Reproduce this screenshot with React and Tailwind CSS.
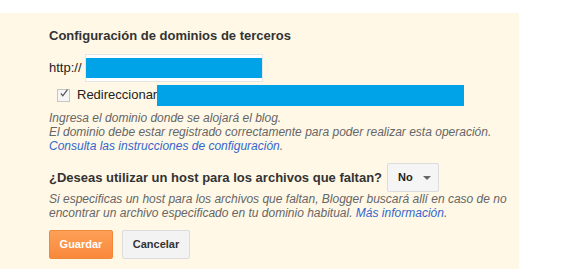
export default function App() {
  return (
    <div className="w-[561px] h-[279px] bg-white pt-[13px]" style={{ fontFamily: '"Liberation Sans", Arial, sans-serif' }}>
      <div className="w-[519px] h-[256px] bg-[#fff8e7] pl-[49px] pt-[15px] text-[#222]">
        <div className="text-[13px] font-bold leading-[16px] text-[#333]">Configuración de dominios de terceros</div>
        <div className="flex items-center mt-[10px] h-[28px]">
          <span className="text-[13px] text-[#222]">http://</span>
          <div className="ml-[3px] w-[178px] h-[28px] bg-white border border-[#e5e5e5] flex items-center">
            <div className="w-[177px] h-[20px] bg-[#00a2e8]"></div>
          </div>
        </div>
        <div className="flex items-center h-[22px] mt-[2px]">
          <div className="ml-[8px] w-[13px] h-[13px] border border-[#c6c6c6] bg-[#f5f5f5] flex items-center justify-center">
            <svg width="13" height="13" viewBox="0 0 13 13" className="-mt-[3px] ml-[1px]">
              <path d="M2.5 6.5 L5 9.5 L11 1.5" stroke="#555" strokeWidth="1.6" fill="none" />
            </svg>
          </div>
          <span className="ml-[7px] text-[13px] text-[#222]">Redireccionar</span>
          <div className="w-[307px] h-[21px] bg-[#00a2e8]"></div>
        </div>
        <div className="mt-[5px] text-[12px] italic leading-[14px] text-[#666]">
          <div>Ingresa el dominio donde se alojará el blog.</div>
          <div>El dominio debe estar registrado correctamente para poder realizar esta operación.</div>
          <div><span className="text-[#3366cc]">Consulta las instrucciones de configuración</span>.</div>
        </div>
        <div className="flex items-center mt-[10px]">
          <span className="text-[13px] font-bold text-[#333]">¿Deseas utilizar un host para los archivos que faltan?</span>
          <div className="ml-[5px] w-[52px] h-[29px] bg-[#f5f5f5] border border-[#dcdcdc] rounded-[2px] flex items-center pl-[10px]">
            <span className="text-[11px] font-bold text-[#222]">No</span>
            <svg width="8" height="4" viewBox="0 0 8 4" className="ml-[10px]">
              <path d="M0 0 L8 0 L4 4 Z" fill="#666" />
            </svg>
          </div>
        </div>
        <div className="text-[12px] italic leading-[14px] text-[#666]">
          <div>Si especificas un host para los archivos que faltan, Blogger buscará allí en caso de no</div>
          <div>encontrar un archivo especificado en tu dominio habitual. <span className="text-[#3366cc]">Más información</span>.</div>
        </div>
        <div className="flex mt-[10px] gap-[9px]">
          <div className="w-[64px] h-[29px] rounded-[2px] border border-[#f0883a] bg-gradient-to-b from-[#fda057] to-[#f9883a] flex items-center justify-center text-white text-[11px] font-bold">Guardar</div>
          <div className="w-[68px] h-[29px] rounded-[2px] border border-[#dcdcdc] bg-[#f3f3f3] flex items-center justify-center text-[#333] text-[11px] font-bold">Cancelar</div>
        </div>
      </div>
    </div>
  );
}
